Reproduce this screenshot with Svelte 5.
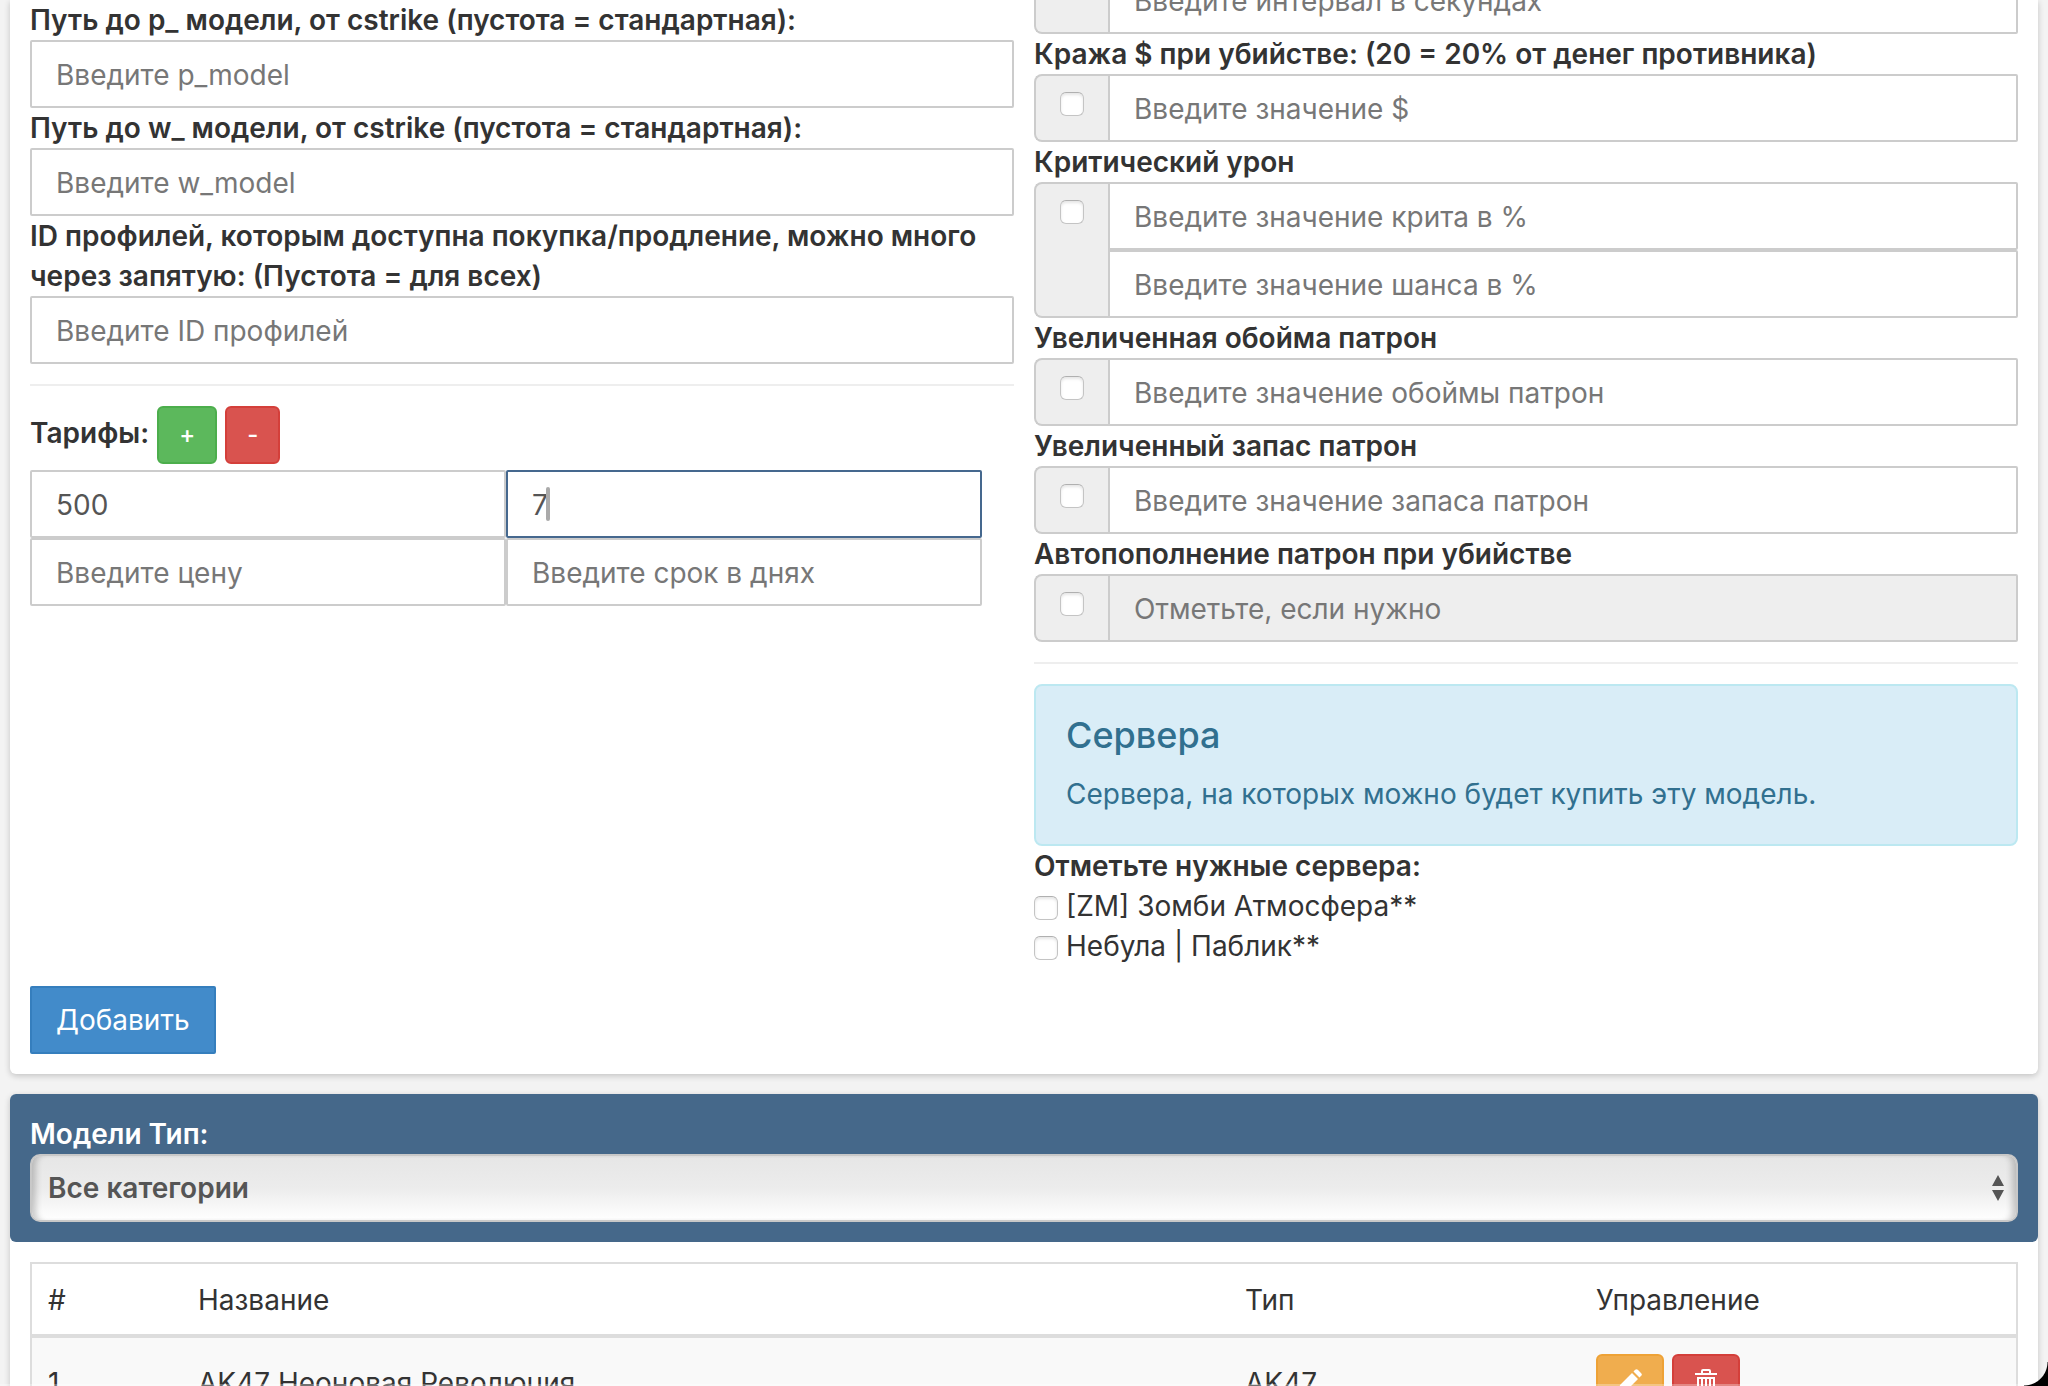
<script>
  const options = [
    { id: 'steal', label: 'Кража $ при убийстве: (20 = 20% от денег противника)', fields: ['Введите значение $'] },
    { id: 'crit', label: 'Критический урон', fields: ['Введите значение крита в %', 'Введите значение шанса в %'] },
    { id: 'clip', label: 'Увеличенная обойма патрон', fields: ['Введите значение обоймы патрон'] },
    { id: 'ammo', label: 'Увеличенный запас патрон', fields: ['Введите значение запаса патрон'] },
    { id: 'refill', label: 'Автопополнение патрон при убийстве', fields: ['Отметьте, если нужно'], disabled: true }
  ];
  const servers = ['[ZM] Зомби Атмосфера**', 'Небула | Паблик**'];
  const models = [{ id: 1, name: 'AK47 Неоновая Революция', type: 'AK47' }];
</script>

<div class="page">
  <main>
    <section class="card form-card">
      <div class="columns">
        <div class="column">
          <label class="title" for="p-model">Путь до p_ модели, от cstrike (пустота = стандартная):</label>
          <input class="control" id="p-model" type="text" placeholder="Введите p_model" />
          <label class="title" for="w-model">Путь до w_ модели, от cstrike (пустота = стандартная):</label>
          <input class="control" id="w-model" type="text" placeholder="Введите w_model" />
          <label class="title" for="profiles">ID профилей, которым доступна покупка/продление, можно много через запятую: (Пустота = для всех)</label>
          <input class="control" id="profiles" type="text" placeholder="Введите ID профилей" />
          <hr />
          <div class="tariff-head">
            <span class="title">Тарифы:</span>
            <button type="button" class="btn small green" aria-label="Добавить тариф">+</button>
            <button type="button" class="btn small red" aria-label="Удалить тариф">-</button>
          </div>
          <div class="tariffs">
            <input class="control" type="text" aria-label="Цена" placeholder="Введите цену" value="500" />
            <div class="editing">
              <input class="control active" type="text" aria-label="Срок" placeholder="Введите срок в днях" value="7" />
              <span class="caret"></span>
            </div>
            <input class="control" type="text" aria-label="Цена" placeholder="Введите цену" />
            <input class="control" type="text" aria-label="Срок" placeholder="Введите срок в днях" />
          </div>
        </div>

        <div class="column scrolled">
          <div class="group">
            <span class="addon"></span>
            <div class="fields">
              <input class="control" type="text" aria-label="Интервал в секундах" placeholder="Введите интервал в секундах" />
            </div>
          </div>
          {#each options as option}
            <label class="title" for={option.id}>{option.label}</label>
            <div class="group">
              <span class="addon"><input type="checkbox" id={option.id} /></span>
              <div class="fields">
                {#each option.fields as field}
                  <input class="control" type="text" aria-label={field} placeholder={field} disabled={option.disabled} />
                {/each}
              </div>
            </div>
          {/each}
          <hr />
          <div class="alert">
            <h4>Сервера</h4>
            <p>Сервера, на которых можно будет купить эту модель.</p>
          </div>
          <span class="title">Отметьте нужные сервера:</span>
          {#each servers as server}
            <label class="server"><input type="checkbox" />{server}</label>
          {/each}
        </div>
      </div>
      <button type="button" class="btn primary">Добавить</button>
    </section>

    <section class="card list-card">
      <div class="filter">
        <label class="title" for="category">Модели Тип:</label>
        <div class="select-wrap">
          <select id="category"><option>Все категории</option></select>
          <svg class="arrows" viewBox="0 0 12 26" aria-hidden="true"><path d="M6 0l6 11H0zM6 26l6-11H0z" /></svg>
        </div>
      </div>
      <div class="table-wrap">
        <table>
          <thead>
            <tr><th class="c-id">#</th><th class="c-name">Название</th><th class="c-type">Тип</th><th>Управление</th></tr>
          </thead>
          <tbody>
            {#each models as model}
              <tr>
                <td>{model.id}</td>
                <td>{model.name}</td>
                <td>{model.type}</td>
                <td>
                  <div class="actions">
                    <button type="button" class="btn icon orange" aria-label="Редактировать">
                      <svg viewBox="-2 0 28 28"><path d="M0 24l2-8L14 4l6 6L8 22zM15.500 2.500L17.200.800q1.300-1.300 2.600 0l3.400 3.400q1.300 1.300 0 2.600L21.500 8.500z" /></svg>
                    </button>
                    <button type="button" class="btn icon red" aria-label="Удалить">
                      <svg viewBox="-2 0 28 28"><path fill-rule="evenodd" d="M7 4V2q0-2 2-2h6q2 0 2 2v2h6v2H1V4zM9 4h6V2H9zM3 8h18v16q0 2-2 2H5q-2 0-2-2zM5 10v14h2V10zM9 10v14h2V10zM13 10v14h2V10zM17 10v14h2V10z" /></svg>
                    </button>
                  </div>
                </td>
              </tr>
            {/each}
          </tbody>
        </table>
      </div>
    </section>
  </main>
  <span class="edge"></span>
  <span class="corner"></span>
</div>

<style>
  :global(body) {
    margin: 0;
    background: #f3f3f3;
  }
  .page,
  .page * {
    box-sizing: border-box;
  }
  .page {
    position: relative;
    height: 100vh;
    overflow: hidden;
    color: #333;
    font-family: Inter, 'Noto Sans', sans-serif;
    font-size: 28px;
    line-height: 40px;
  }
  input,
  select,
  button {
    font: inherit;
    margin: 0;
  }
  main {
    display: flex;
    flex-direction: column;
    gap: 20px;
    padding: 0 10px;
  }
  .card {
    background: #fff;
    border-radius: 6px;
    box-shadow: 0 2px 6px rgba(0, 0, 0, 0.2);
  }
  .form-card {
    padding: 0 20px 20px;
    border-radius: 0 0 6px 6px;
  }
  .columns {
    display: grid;
    grid-template-columns: 1fr 1fr;
    gap: 20px;
    margin-bottom: 20px;
  }
  .column {
    min-width: 0;
  }
  .scrolled {
    margin-top: -34px;
  }
  .title {
    display: block;
    font-weight: 600;
  }
  .control {
    display: block;
    width: 100%;
    height: 68px;
    padding: 14px 24px 12px;
    border: 2px solid #ccc;
    border-radius: 2px;
    background: #fff;
    color: #555;
    outline: none;
  }
  .control::placeholder {
    color: #777;
    opacity: 1;
  }
  .control:disabled {
    background: #eee;
  }
  .control.active {
    border-color: #45688e;
  }
  hr {
    height: 2px;
    margin: 20px 0;
    border: 0;
    background: #eee;
  }
  .btn {
    border: 2px solid;
    color: #fff;
    cursor: pointer;
  }
  .tariff-head {
    display: flex;
    gap: 8px;
    margin-bottom: 6px;
    line-height: 54px;
  }
  .small {
    height: 58px;
    padding: 0 20px;
    border-radius: 6px;
    font-size: 24px;
    font-weight: 500;
  }
  .green {
    background: #5cb85c;
    border-color: #4cae4c;
  }
  .red {
    background: #d9534f;
    border-color: #d43f3a;
  }
  .orange {
    background: #f0ad4e;
    border-color: #eea236;
  }
  .tariffs {
    display: grid;
    grid-template-columns: 1fr 1fr;
    margin-right: 32px;
  }
  .editing {
    position: relative;
  }
  .caret {
    position: absolute;
    top: 17px;
    left: 40px;
    width: 4px;
    height: 34px;
    border-radius: 2px;
    background: #aaa;
  }
  .group {
    display: flex;
  }
  .addon {
    flex: none;
    width: 74px;
    padding: 16px 0 0 24px;
    border: 2px solid #ccc;
    border-right: 0;
    border-radius: 8px 0 0 8px;
    background: #eee;
  }
  .fields {
    flex: 1;
    min-width: 0;
  }
  .fields .control {
    border-radius: 0 2px 2px 0;
  }
  input[type='checkbox'] {
    appearance: none;
    display: block;
    flex: none;
    width: 24px;
    height: 24px;
    border: 1px solid #c4c4c4;
    border-top-color: #b0b0b0;
    border-radius: 6px;
    background: #fff;
    box-shadow: inset 0 2px 3px rgba(0, 0, 0, 0.1);
  }
  .alert {
    padding: 29px 30px 31px;
    border: 2px solid #bce8f1;
    border-radius: 8px;
    background: #d9edf7;
    color: #31708f;
  }
  .alert h4 {
    margin: 0 0 20px;
    font-size: 36px;
    line-height: 40px;
    font-weight: 500;
  }
  .alert p {
    margin: 0;
    line-height: 38px;
  }
  .server {
    display: flex;
    align-items: flex-start;
    gap: 8px;
  }
  .server input[type='checkbox'] {
    margin-top: 10px;
  }
  .primary {
    display: block;
    height: 68px;
    padding: 0 24px;
    border-radius: 2px;
    background: #428bca;
    border-color: #357ebd;
  }
  .filter {
    padding: 20px;
    border-radius: 6px;
    background: #45688a;
    color: #fff;
  }
  .select-wrap {
    position: relative;
  }
  select {
    appearance: none;
    display: block;
    width: 100%;
    height: 68px;
    padding: 0 16px;
    border: 2px solid #c8c8c8;
    border-radius: 10px;
    background: linear-gradient(#e6e6e6, #ececec 50%, #fff);
    box-shadow: inset 8px 0 6px -4px rgba(0, 0, 0, 0.2), inset -8px 0 6px -4px rgba(0, 0, 0, 0.2);
    color: #555;
    font-weight: 600;
  }
  .arrows {
    position: absolute;
    top: 21px;
    right: 14px;
    width: 12px;
    height: 26px;
    fill: #555;
  }
  .table-wrap {
    padding: 20px;
  }
  table {
    width: 100%;
    border: 2px solid #ddd;
    border-collapse: separate;
    border-spacing: 0;
    table-layout: fixed;
  }
  th,
  td {
    padding: 16px;
    text-align: left;
    font-weight: 400;
  }
  th {
    padding: 16px 16px 14px;
    border-bottom: 4px solid #ddd;
  }
  tbody tr {
    background: #f9f9f9;
  }
  .c-id {
    width: 150px;
  }
  .c-name {
    width: 1047px;
  }
  .c-type {
    width: 351px;
  }
  .actions {
    display: flex;
    gap: 8px;
  }
  .icon {
    display: grid;
    place-items: center;
    width: 68px;
    height: 58px;
    padding: 0;
    border-radius: 6px;
  }
  .icon svg {
    width: 28px;
    height: 28px;
    fill: #fff;
  }
  .edge {
    position: absolute;
    right: 0;
    bottom: 0;
    left: 0;
    height: 2px;
    background: rgba(255, 255, 255, 0.3);
  }
  .corner {
    position: absolute;
    right: 0;
    bottom: 0;
    width: 24px;
    height: 24px;
    background: radial-gradient(circle at 0 0, transparent 23px, #000 24px);
  }
</style>
